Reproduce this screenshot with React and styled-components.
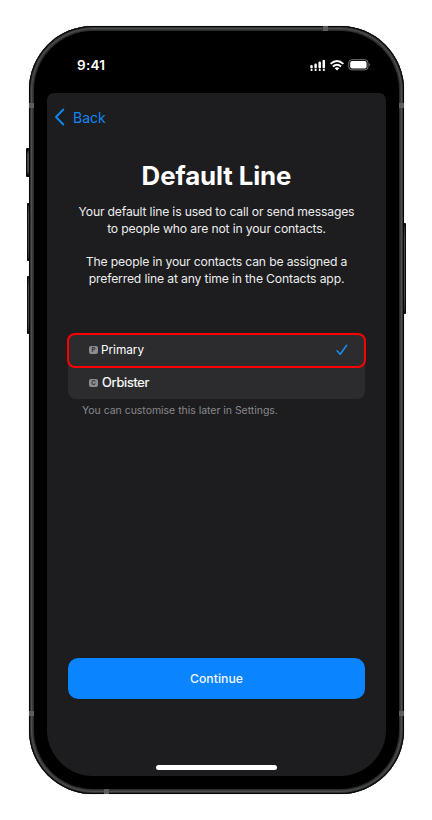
import React from "react";
import styled, { createGlobalStyle } from "styled-components";

const GlobalStyle = createGlobalStyle`
  * { box-sizing: border-box; }
  body { margin: 0; background: #fff; font-family: Inter, "Liberation Sans", sans-serif; }
`;

const Stage = styled.div`
  isolation: isolate;
  width: 432px;
  height: 820px;
  padding: 26px 0 0 29px;
  background: #fff;
  overflow: hidden;
`;

const Phone = styled.div`
  position: relative;
  width: 375px;
  height: 768px;
  padding: 5px;
  border-radius: 64px;
  background: #3b3c3c;
  box-shadow: inset 0 0 0 1px #060606, inset 0 0 0 2px #323333, inset 0 0 0 3px #4c4d4d,
    inset 0 0 0 4px #3a3b3b, 0 0 1px #777;
`;

const Bezel = styled.div`
  height: 758px;
  padding: 0 13px 13px;
  border-radius: 59px;
  background: #000;
  box-shadow: 0 0 0 1px #292a2a;
`;

const SideButton = styled.div`
  position: absolute;
  z-index: -1;
  left: ${(p) => p.$left}px;
  top: ${(p) => p.$top}px;
  width: ${(p) => p.$width}px;
  height: ${(p) => p.$height}px;
  border: solid #080909;
  border-width: 3px 1px;
  border-radius: 1px;
  background: linear-gradient(#202121, #484949 15%, #414242 85%, #202121);
`;

const AntennaBand = styled.div`
  position: absolute;
  left: ${(p) => p.$left}px;
  top: ${(p) => p.$top}px;
  width: 5px;
  height: 5px;
  background: #5b5c5b;
`;

const StatusBar = styled.div`
  height: 62px;
  display: flex;
  align-items: center;
  justify-content: space-between;
  padding: 5px 15px 0 30px;
  color: #fff;
`;

const Clock = styled.span`
  font-size: 13.5px;
  line-height: 16px;
  font-weight: 600;
  letter-spacing: 0.25px;
`;

const StatusIcons = styled.svg`
  display: block;
  width: 62px;
  height: 14px;
`;

const Screen = styled.main`
  height: 683px;
  display: flex;
  flex-direction: column;
  align-items: center;
  border-radius: 7px 7px 46px 46px;
  background: #1d1d1f;
  color: #fff;
`;

const BackButton = styled.div`
  align-self: flex-start;
  display: flex;
  align-items: center;
  gap: 8px;
  height: 20px;
  margin: 14px 0 0 7px;
  color: #0f86f3;
  font-size: 14px;
  letter-spacing: 0;
`;

const BackArrow = styled.svg`
  width: 11px;
  height: 18px;
`;

const Title = styled.h1`
  margin: 33px 0 0;
  font-size: 25.8px;
  line-height: 32px;
  font-weight: 700;
  letter-spacing: -0.08px;
  white-space: nowrap;
`;

const Description = styled.div`
  margin-top: 12px;
  display: grid;
  grid-template-rows: 16.6px 33.4px 16.6px 16.6px;
  justify-items: center;
  line-height: 16.6px;
  font-size: 12.2px;
  color: #ececed;
`;

const Line = styled.span`
  white-space: nowrap;
  letter-spacing: ${(p) => p.$spacing}px;
`;

const LineList = styled.div`
  width: 297px;
  margin: 46.8px 0 0 0;
  border-radius: 8px;
  background: #2c2c2e;
`;

const LineRow = styled.div`
  display: flex;
  align-items: center;
  height: ${(p) => (p.$selected ? 35 : 31)}px;
  margin: ${(p) => (p.$selected ? "-1px -1px 0" : "0")};
  padding: ${(p) => (p.$selected ? "0 16px 1px 20px" : "0 20px 0 21px")};
  border: ${(p) => (p.$selected ? "2px solid #fd0003" : "0")};
  border-radius: 8px;
`;

const Badge = styled.span`
  width: 9px;
  height: 8px;
  margin-right: ${(p) => p.$gap}px;
  border-radius: 2px;
  background: #8c8c90;
  color: #303033;
  font-size: 6px;
  line-height: 8px;
  font-weight: 700;
  text-align: center;
`;

const LineName = styled.span`
  font-size: ${(p) => p.$size}px;
  line-height: 18px;
  letter-spacing: ${(p) => p.$spacing}px;
  -webkit-text-stroke: ${(p) => p.$stroke || 0}px currentColor;
`;

const Check = styled.svg`
  width: 12px;
  height: 12px;
  margin-left: auto;
`;

const Footnote = styled.p`
  align-self: flex-start;
  margin: 4px 0 0 35px;
  color: #88888c;
  font-size: 10.5px;
  line-height: 15px;
  letter-spacing: -0.03px;
  white-space: nowrap;
`;

const ContinueButton = styled.button`
  width: 297px;
  height: 41px;
  margin: auto 0 66px;
  padding: 0;
  border: 0;
  border-radius: 10px;
  background: #0a84ff;
  color: #f3f8ff;
  font: 500 12.2px/41px Inter, sans-serif;
  letter-spacing: 0.05px;
  box-shadow: 0 0 1px #160e08;
`;

const HomeIndicator = styled.div`
  width: 121px;
  height: 5px;
  margin-bottom: 6px;
  border-radius: 3px;
  background: #fff;
`;

export default function App() {
  return (
    <>
      <GlobalStyle />
      <Stage>
        <Phone>
          <SideButton $left={-3} $top={122} $width={4} $height={29} />
          <SideButton $left={-2} $top={177} $width={3} $height={58} />
          <SideButton $left={-2} $top={250} $width={3} $height={58} />
          <SideButton $left={374} $top={197} $width={3} $height={91} />
          <AntennaBand $left={0} $top={77} />
          <AntennaBand $left={370} $top={77} />
          <AntennaBand $left={0} $top={685} />
          <AntennaBand $left={370} $top={685} />
          <AntennaBand $left={294} $top={0} />
          <AntennaBand $left={75} $top={763} />
          <Bezel>
            <StatusBar>
              <Clock>9:41</Clock>
              <StatusIcons viewBox="0 0 62 14">
                <path d="M2.5 9.2V8.3M6.6 9.2V6.8M10.7 9.2V4.7M14.8 9.2V2.9" fill="none" stroke="#fff" strokeWidth="2.5" strokeLinecap="round" />
                <path d="M2.5 12h.1M6.6 12h.1M10.7 12h.1M14.8 12h.1" stroke="#fff" strokeWidth="2.2" strokeLinecap="round" />
                <path d="M21.6 5.9Q28 0 34.4 5.9M23.9 8.5Q28 4.9 32.1 8.5" fill="none" stroke="#fff" strokeWidth="1.9" />
                <path d="M28 12.6L25.7 10.3Q28 8.4 30.3 10.3Z" fill="#fff" />
                <rect x="39.8" y="1.7" width="19.2" height="10.2" rx="3.1" fill="none" stroke="#777" strokeWidth="1" />
                <rect x="41.2" y="3.1" width="16.4" height="7.4" rx="1.8" fill="#fff" />
                <path d="M60.2 5.1Q62 6.8 60.2 8.5Z" fill="#777" />
              </StatusIcons>
            </StatusBar>
            <Screen>
              <BackButton>
                <BackArrow viewBox="0 0 11 18">
                  <path d="M9.3 1.5L2 9l7.3 7.5" fill="none" stroke="currentColor" strokeWidth="1.9" strokeLinecap="round" strokeLinejoin="round" />
                </BackArrow>
                <span>Back</span>
              </BackButton>
              <Title>Default Line</Title>
              <Description>
                <Line $spacing={-0.18}>Your default line is used to call or send messages</Line>
                <Line $spacing={-0.16}>to people who are not in your contacts.</Line>
                <Line $spacing={-0.17}>The people in your contacts can be assigned a</Line>
                <Line $spacing={-0.16}>preferred line at any time in the Contacts app.</Line>
              </Description>
              <LineList>
                <LineRow $selected>
                  <Badge $gap={3}>P</Badge>
                  <LineName $size={11.8} $spacing={-0.02}>Primary</LineName>
                  <Check viewBox="0 0 12 12">
                    <path d="M1.1 6.8L4.2 10.2L10.7 1.3" fill="none" stroke="#1591f5" strokeWidth="1.5" strokeLinecap="round" strokeLinejoin="round" />
                  </Check>
                </LineRow>
                <LineRow>
                  <Badge $gap={4}>C</Badge>
                  <LineName $size={12.8} $spacing={-0.2} $stroke={0.2}>Orbister</LineName>
                </LineRow>
              </LineList>
              <Footnote>You can customise this later in Settings.</Footnote>
              <ContinueButton>Continue</ContinueButton>
              <HomeIndicator />
            </Screen>
          </Bezel>
        </Phone>
      </Stage>
    </>
  );
}
